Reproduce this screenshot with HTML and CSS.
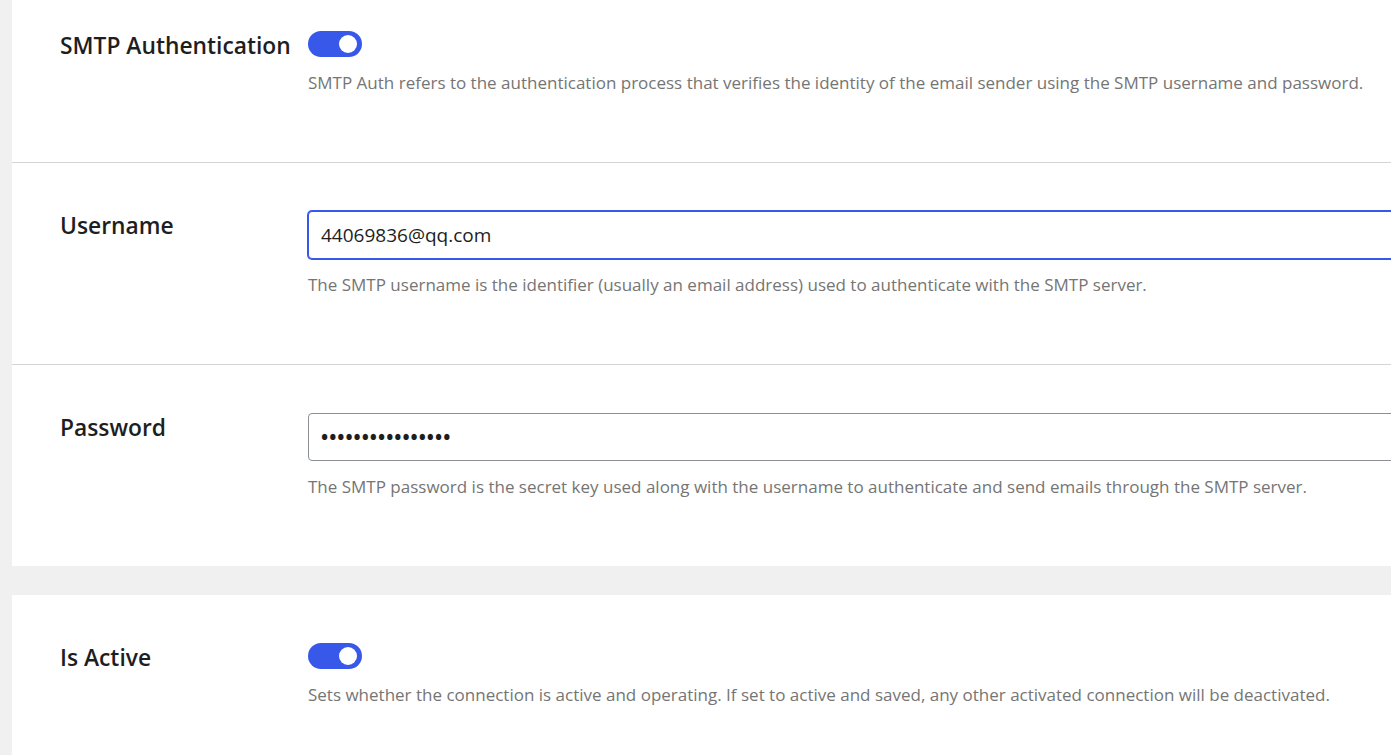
FILE: index.html
```html
<!DOCTYPE html>
<html lang="en">
<head>
  <meta charset="UTF-8">
  <meta name="viewport" content="width=device-width, initial-scale=1.0">
  <title>SMTP Connection</title>
  <link rel="stylesheet" href="styles.css">
</head>
<body>
  <div class="page">
    <div class="card">
      <div class="row row-first">
        <div class="label">SMTP Authentication</div>
        <div class="field">
          <span class="toggle on"><span class="knob"></span></span>
          <p class="desc">SMTP Auth refers to the authentication process that verifies the identity of the email sender using the SMTP username and password.</p>
        </div>
      </div>

      <div class="row">
        <div class="label">Username</div>
        <div class="field">
          <input class="input input-focus" type="text" value="44069836@qq.com">
          <p class="desc">The SMTP username is the identifier (usually an email address) used to authenticate with the SMTP server.</p>
        </div>
      </div>

      <div class="row">
        <div class="label">Password</div>
        <div class="field">
          <input class="input input-password" type="password" value="abcdefghijklmnop">
          <p class="desc">The SMTP password is the secret key used along with the username to authenticate and send emails through the SMTP server.</p>
        </div>
      </div>
    </div>

    <div class="card">
      <div class="row">
        <div class="label">Is Active</div>
        <div class="field">
          <span class="toggle on"><span class="knob"></span></span>
          <p class="desc">Sets whether the connection is active and operating. If set to active and saved, any other activated connection will be deactivated.</p>
        </div>
      </div>
    </div>
  </div>
</body>
</html>
```

FILE: styles.css
```css
body {
  margin: 0;
  background-color: #f0f0f0;
  font-family: "Open Sans", "Noto Sans", sans-serif;
  overflow: hidden;
}
.page {
  width: 1700px;
  margin-top: -17px;
  padding-left: 12px;
  display: flex;
  flex-direction: column;
  gap: 29px;
}
.card {
  background-color: #fff;
}
.row {
  display: flex;
  padding: 48px 0 67px 48px;
  border-bottom: 1px solid #d4d4d4;
}
.row:last-child {
  border-bottom: none;
}
.label {
  width: 248px;
  flex-shrink: 0;
  font-size: 22.8px;
  font-weight: 600;
  line-height: 30px;
  color: #1e1e1e;
}
.field {
  width: 1300px;
}
.toggle {
  display: block;
  width: 54px;
  height: 26px;
  border-radius: 13px;
  background-color: #3858e9;
  position: relative;
}
.knob {
  position: absolute;
  top: 4px;
  right: 5px;
  width: 18px;
  height: 18px;
  border-radius: 50%;
  background-color: #fff;
}
.input {
  display: block;
  box-sizing: border-box;
  width: 100%;
  height: 48px;
  padding: 0 12px;
  border: 1px solid #8c8f94;
  border-radius: 4px;
  font-family: inherit;
  font-size: 19px;
  color: #1e1e1e;
  outline: none;
}
.input-focus {
  border-color: #3858e9;
  box-shadow: 0 0 0 1px #3858e9;
}
.input-password {
  letter-spacing: 1px;
  font-weight: 700;
}
.desc {
  margin: 14px 0 0;
  font-size: 17px;
  line-height: 24px;
  color: #757575;
}
```
